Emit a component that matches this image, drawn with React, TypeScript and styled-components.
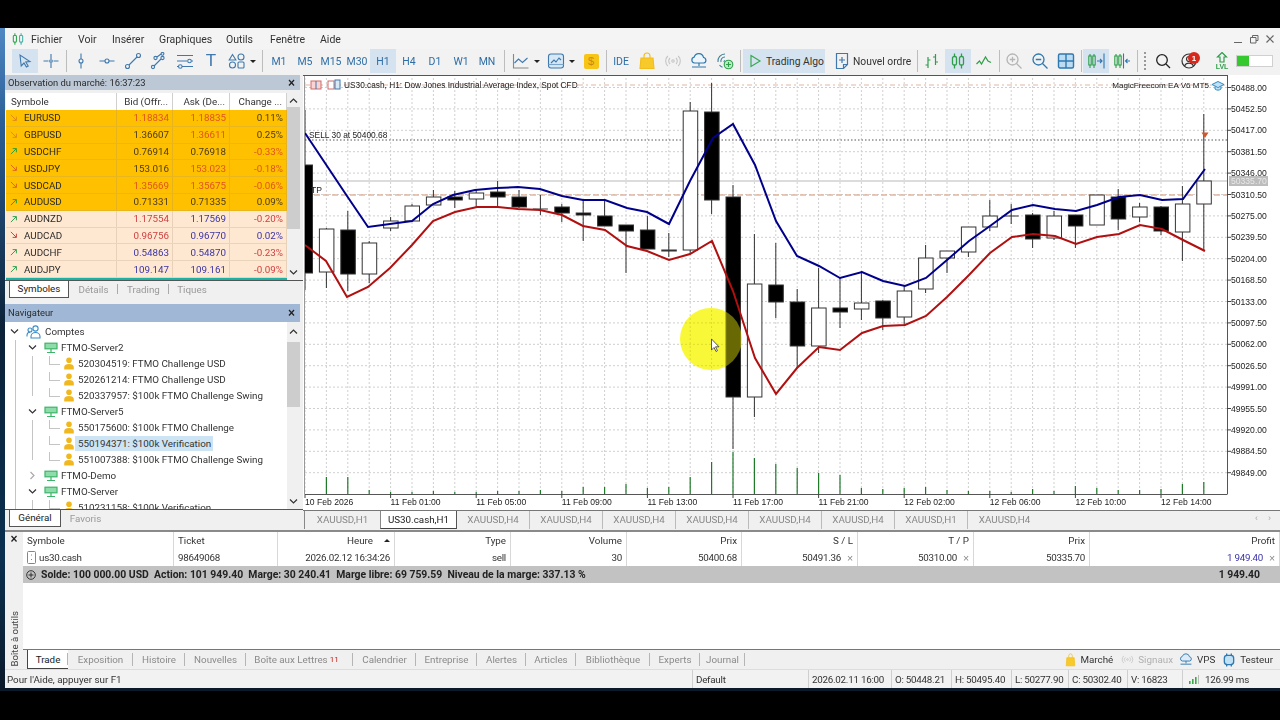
import React from "react";
import styled, { createGlobalStyle } from "styled-components";

const Global = createGlobalStyle`
  html, body { margin: 0; padding: 0; background: #000; }
  body { font-family: Roboto, "Liberation Sans", sans-serif; font-size: 9.8px; color: #222; overflow: hidden; }
  #root { height: 720px; }
`;

const Page = styled.div`
  height: 720px;
  padding-top: 28px;
  box-sizing: border-box;
  background: #000;
`;
const Desktop = styled.div`
  height: 663px;
  padding: 0 0 3px 5px;
  box-sizing: border-box;
  background: linear-gradient(180deg, #4f88c4 0, #2c5f96 14%, #0c2238 45%, #0a3050 80%, #0b1a2a 100%);
`;
const Win = styled.div`
  height: 660px;
  background: #f0f0f0;
  display: flex;
  flex-direction: column;
`;
const MenuBar = styled.div`
  height: 21px;
  padding-top: 1px;
  box-sizing: border-box;
  display: flex;
  align-items: center;
  background: #f4f4f4;
  flex: none;
`;
const Logo = styled.span`
  width: 26px;
  display: flex;
  justify-content: center;
`;
const MenuItem = styled.span<{ $w: number }>`
  width: ${(p) => p.$w}px;
  font-size: 10.5px;
  color: #333;
`;
const WinCtrls = styled.div`
  margin-left: auto;
  display: flex;
  align-items: center;
  gap: 2px;
  padding-right: 3px;
`;
const WinBtn = styled.span`
  width: 14px;
  height: 14px;
  display: flex;
  align-items: center;
  justify-content: center;
`;
const ToolBar = styled.div`
  height: 26px;
  padding-bottom: 2px;
  box-sizing: border-box;
  flex: none;
  display: flex;
  align-items: center;
  padding-left: 7px;
  background: #f2f2f2;
`;
const Btn = styled.span<{ $w?: number; $on?: boolean; $ml?: number }>`
  width: ${(p) => p.$w ?? 26}px;
  margin-left: ${(p) => p.$ml ?? 0}px;
  height: 24px;
  flex: none;
  display: flex;
  align-items: center;
  justify-content: center;
  position: relative;
  color: #2f6ea5;
  font-size: 10.5px;
  background: ${(p) => (p.$on ? "#d5e3f0" : "transparent")};
`;
const Sep = styled.span<{ $w?: number }>`
  width: ${(p) => p.$w ?? 4}px;
  height: 22px;
  flex: none;
  display: flex;
  justify-content: center;
  &::after {
    content: "";
    width: 1px;
    height: 100%;
    background: #bdbdbd;
  }
`;
const DotSep = styled.span`
  width: 11px;
  height: 18px;
  flex: none;
  display: flex;
  justify-content: center;
  &::after {
    content: "";
    border-left: 2px dotted #999;
    height: 100%;
  }
`;
const Caret = styled.span<{ $w?: number }>`
  width: ${(p) => p.$w ?? 8}px;
  flex: none;
  display: flex;
  justify-content: flex-start;
  &::after {
    content: "";
    border-left: 3px solid transparent;
    border-right: 3px solid transparent;
    border-top: 3px solid #222;
  }
`;
const BigBtn = styled(Btn)`
  justify-content: flex-start;
  gap: 2px;
  padding-left: 3px;
  box-sizing: border-box;
  color: #333;
  font-size: 10.3px;
  white-space: nowrap;
`;
const Tee = styled.span`
  font: 17px "Liberation Sans", sans-serif;
  color: #3f78ad;
`;
const DollarBox = styled.span`
  width: 15px;
  height: 15px;
  border-radius: 2px;
  background: #f7c516;
  color: #c98a10;
  display: flex;
  align-items: center;
  justify-content: center;
  font: 11px "Liberation Sans", sans-serif;
`;
const Badge = styled.span`
  position: absolute;
  top: 3px;
  right: 2px;
  width: 12px;
  height: 12px;
  border-radius: 50%;
  background: #d6291c;
  color: #fff;
  font: bold 8px "Liberation Sans", sans-serif;
  display: flex;
  align-items: center;
  justify-content: center;
`;
const Lvl = styled.span`
  display: flex;
  flex-direction: column;
  align-items: center;
  color: #2f9e4a;
  font: bold 7px "Liberation Sans", sans-serif;
  line-height: 7px;
`;
const Meter = styled.span`
  width: 37px;
  height: 12px;
  flex: none;
  background: #fff;
  border: 1px solid #d0d0d0;
  box-sizing: border-box;
  margin-left: 1px;
  display: flex;
  &::before {
    content: "";
    width: 12px;
    background: #35c92f;
  }
`;

const Main = styled.div`
  height: 455px;
  flex: none;
  display: flex;
`;
const Left = styled.div`
  width: 298px;
  flex: none;
  display: flex;
  flex-direction: column;
`;
const PanelHead = styled.div<{ $blue?: boolean }>`
  height: ${(p) => (p.$blue ? 18 : 15)}px;
  flex: none;
  background: ${(p) => (p.$blue ? "#a0b8d6" : "#bcc8d6")};
  display: flex;
  align-items: center;
  justify-content: space-between;
  padding: 0 5px 0 3px;
  width: 295px;
  box-sizing: border-box;
  color: #2a2a2a;
  font-size: 9.4px;
`;
const CloseX = styled.span`
  font: bold 12px "Liberation Sans", sans-serif;
  color: #222;
`;
const MarketBody = styled.div`
  display: flex;
  margin-top: 3px;
  padding-left: 1px;
`;
const MarketTable = styled.div`
  width: 281px;
  flex: none;
`;
const MRow = styled.div<{ $bg?: string; $h: number }>`
  display: grid;
  grid-template-columns: 111px 56px 57px 57px;
  height: ${(p) => p.$h}px;
  align-items: stretch;
  background: ${(p) => p.$bg ?? "#fff"};
  border-bottom: ${(p) => (p.$bg ? "1px solid rgba(170,150,120,.25)" : "none")};
  box-sizing: border-box;
`;
const HCell = styled.div<{ $r?: boolean }>`
  display: flex;
  align-items: center;
  justify-content: ${(p) => (p.$r ? "flex-end" : "flex-start")};
  padding: ${(p) => (p.$r ? "0 4px 0 0" : "0 0 0 5px")};
  border-right: 1px solid #d0d0d0;
  color: #333;
`;
const SymCell = styled.div`
  display: flex;
  align-items: center;
  gap: 6px;
  padding-left: 4px;
  color: #2b2b2b;
  border-right: 1px solid rgba(160, 140, 110, 0.25);
`;
const NumCell = styled.div<{ $c: string }>`
  display: flex;
  align-items: center;
  justify-content: flex-end;
  padding-right: 3px;
  color: ${(p) => p.$c};
  border-right: 1px solid rgba(160, 140, 110, 0.25);
`;
const Teal = styled.div`
  height: 2px;
  background: #19b3a6;
  width: 281px;
`;
const ScrollBar = styled.div`
  width: 13px;
  flex: none;
  background: #f0f0f0;
  display: flex;
  flex-direction: column;
  align-items: center;
`;
const Thumb = styled.div<{ $h: number }>`
  width: 100%;
  height: ${(p) => p.$h}px;
  background: #cdcdcd;
`;
const Fill = styled.div`
  flex: 1;
`;
const Arrow = styled.span<{ $h?: number }>`
  height: ${(p) => p.$h ?? 14}px;
  display: flex;
  align-items: center;
`;
const TabsRow = styled.div<{ $h: number }>`
  height: ${(p) => p.$h}px;
  flex: none;
  display: flex;
  border-top: 1px solid #555;
  box-sizing: border-box;
  padding-left: 4px;
`;
const SideTab = styled.div<{ $w: number; $on?: boolean; $sep?: boolean }>`
  width: ${(p) => p.$w}px;
  box-sizing: border-box;
  display: flex;
  align-items: center;
  justify-content: center;
  color: ${(p) => (p.$on ? "#222" : "#999")};
  background: ${(p) => (p.$on ? "#fff" : "transparent")};
  border: ${(p) => (p.$on ? "1px solid #555" : "none")};
  border-top: none;
  position: relative;
  &::after {
    content: "";
    display: ${(p) => (p.$sep ? "block" : "none")};
    position: absolute;
    right: 0;
    top: 3px;
    bottom: 4px;
    width: 1px;
    background: #aaa;
  }
`;
const Nav = styled.div`
  margin-top: 6px;
  display: flex;
  flex-direction: column;
`;
const NavBody = styled.div`
  height: 187px;
  display: flex;
  background: #fff;
  width: 295px;
`;
const Tree = styled.div`
  width: 282px;
  flex: none;
  overflow: hidden;
  padding-top: 2px;
`;
const TreeRow = styled.div<{ $x: number }>`
  height: 16px;
  display: flex;
  align-items: center;
  padding-left: ${(p) => p.$x}px;
  position: relative;
  color: #333;
`;
const Guide = styled.span<{ $x: number; $tall?: boolean; $w?: number }>`
  position: absolute;
  left: ${(p) => p.$x}px;
  top: 0;
  height: ${(p) => (p.$tall ? 16 : 8)}px;
  width: ${(p) => p.$w ?? 0}px;
  border-left: 1px solid #c4c4c4;
  border-bottom: ${(p) => (p.$w ? "1px solid #c4c4c4" : "none")};
`;
const Chevron = styled.span`
  width: 18px;
  margin-right: 3px;
  flex: none;
  display: flex;
  align-items: center;
  justify-content: center;
`;
const Label = styled.span<{ $sel?: boolean }>`
  padding: 1px 2px;
  margin-left: 1px;
  background: ${(p) => (p.$sel ? "#cde4f5" : "transparent")};
  white-space: nowrap;
`;
const SelWrap = styled.span<{ $sel?: boolean }>`
  display: flex;
  align-items: center;
  height: 15px;
  background: ${(p) => (p.$sel ? "#cde4f5" : "transparent")};
`;

const Right = styled.div`
  flex: 1;
  display: flex;
  flex-direction: column;
  min-width: 0;
`;
const ChartBox = styled.div`
  height: 435px;
  flex: none;
  background: #fff;
`;
const ChartTabs = styled.div`
  height: 20px;
  flex: none;
  display: flex;
  align-items: center;
  border-top: 1px solid #777;
  box-sizing: border-box;
  padding-left: 1px;
  position: relative;
`;
const ChartTab = styled.div<{ $w: number; $on?: boolean; $first?: boolean; $sep?: boolean }>`
  width: ${(p) => p.$w}px;
  height: 18px;
  box-sizing: border-box;
  display: flex;
  align-items: center;
  justify-content: center;
  color: ${(p) => (p.$on ? "#222" : "#888")};
  background: ${(p) => (p.$on ? "#fff" : "transparent")};
  border-left: ${(p) => (p.$on || p.$first ? "1px solid #888" : "none")};
  border-right: ${(p) => (p.$on ? "1px solid #555" : p.$sep ? "1px solid #bbb" : "none")};
  border-bottom: ${(p) => (p.$on ? "1px solid #444" : "none")};
  margin-top: -2px;
`;
const TabArrows = styled.span`
  position: absolute;
  right: 9px;
  top: 2px;
  display: flex;
  gap: 10px;
  color: #aaa;
  font: 9px "Liberation Sans", sans-serif;
`;

const Toolbox = styled.div`
  height: 139px;
  flex: none;
  display: flex;
  border-top: 2px solid #8a8a8a;
  box-sizing: border-box;
`;
const BoxSide = styled.div`
  width: 18px;
  flex: none;
  display: flex;
  flex-direction: column;
  align-items: center;
  justify-content: space-between;
  padding-bottom: 2px;
  box-sizing: border-box;
`;
const Vertical = styled.span`
  writing-mode: vertical-rl;
  transform: rotate(180deg);
  font-size: 9.6px;
  color: #444;
`;
const ToolboxInner = styled.div`
  flex: 1;
  min-width: 0;
  display: flex;
  flex-direction: column;
`;
const TradeArea = styled.div`
  flex: 1;
  background: #fff;
  display: flex;
  flex-direction: column;
`;
const TRow = styled.div<{ $h: number }>`
  height: ${(p) => p.$h}px;
  flex: none;
  display: grid;
  grid-template-columns: 151px 104px 117px 116px 116px 115px 116px 116px 116px 1fr;
`;
const TCell = styled.div<{ $r?: boolean; $c?: string }>`
  display: flex;
  align-items: center;
  justify-content: ${(p) => (p.$r ? "flex-end" : "flex-start")};
  padding: 0 4px;
  gap: 3px;
  color: ${(p) => p.$c ?? "#333"};
  border-right: 1px solid #d8d8d8;
  white-space: nowrap;
`;
const TNum = styled(TCell)`
  letter-spacing: -0.25px;
`;
const SmallX = styled.span`
  color: #888;
  font: 10.5px "Liberation Sans", sans-serif;
  margin-left: 3px;
`;
const Sort = styled.span`
  border-left: 3px solid transparent;
  border-right: 3px solid transparent;
  border-bottom: 3px solid #222;
  margin-left: 8px;
`;
const TotalRow = styled.div`
  height: 17px;
  flex: none;
  background: #c2c2c2;
  display: flex;
  align-items: center;
  padding: 0 20px 0 3px;
  gap: 5px;
  font-size: 10.4px;
  font-weight: 700;
  color: #222;
  white-space: pre;
`;
const Total = styled.span`
  margin-left: auto;
`;
const BottomTabs = styled.div`
  height: 20px;
  flex: none;
  display: flex;
  align-items: stretch;
  border-top: 1px solid #777;
  box-sizing: border-box;
  padding-left: 4px;
`;
const BTab = styled.div<{ $w: number; $on?: boolean }>`
  width: ${(p) => p.$w}px;
  box-sizing: border-box;
  display: flex;
  align-items: center;
  justify-content: center;
  color: ${(p) => (p.$on ? "#222" : "#8a8a8a")};
  background: ${(p) => (p.$on ? "#fff" : "transparent")};
  border-left: ${(p) => (p.$on ? "1px solid #444" : "none")};
  border-bottom: ${(p) => (p.$on ? "1px solid #444" : "none")};
  position: relative;
  &::after {
    content: "";
    position: absolute;
    right: 0;
    top: 3px;
    bottom: 3px;
    width: 1px;
    background: #b5b5b5;
  }
`;
const Sub = styled.sub`
  color: #c02020;
  font-size: 8px;
  margin-left: 2px;
  margin-right: 6px;
  line-height: 0;
`;
const TabRight = styled.div`
  margin-left: auto;
  display: flex;
  align-items: center;
  gap: 4px;
  padding-right: 7px;
  color: #333;
`;
const Dim = styled.span`
  color: #b0b0b0;
  margin-right: 2px;
`;
const Spaced = styled.span<{ $m: number }>`
  margin-right: ${(p) => p.$m}px;
`;
const StatusBar = styled.div`
  flex: 1;
  display: flex;
  align-items: center;
  border-top: 1px solid #ddd;
  box-sizing: border-box;
  color: #333;
  background: #f2f2f2;
`;
const SCell = styled.div<{ $w: number }>`
  width: ${(p) => p.$w}px;
  flex: none;
  height: 100%;
  display: flex;
  align-items: center;
  gap: 6px;
  padding-left: 3px;
  box-sizing: border-box;
  border-left: 1px solid #cfcfcf;
  white-space: nowrap;
  letter-spacing: -0.25px;
`;
const SFirst = styled.div`
  width: 685px;
  flex: none;
  padding-left: 2px;
`;
const BarsWrap = styled.span`
  margin-left: 3px;
  display: flex;
`;

/* ---------- icons ---------- */
const Ic: React.FC<{ s?: number; children: React.ReactNode; c?: string; f?: string; w?: number }> = ({ s = 18, children, c = "#3f78ad", f = "none", w = 1.1 }) => (
  <svg width={s} height={s} viewBox="0 0 18 18" fill={f} stroke={c} strokeWidth={w}>
    {children}
  </svg>
);
const CursorIc = () => <Ic><path d="M4 3l1.2 11 2.8-3 2.4 4 1.8-1-2.4-4 4.2-.4z" /></Ic>;
const CrossIc = () => <Ic><path d="M1.500 9h5M11.500 9h5M9 2v5M9 11v5" /><circle cx="9" cy="9" r="1.300" /></Ic>;
const VertIc = () => <Ic><path d="M9 1.500v5.500M9 11v5.500" /><circle cx="9" cy="9" r="2" /></Ic>;
const HorIc = () => <Ic><path d="M1.500 9h5.500M11 9h5.500" /><circle cx="9" cy="9" r="2" /></Ic>;
const TrendIc = () => <Ic><path d="M5 13l8-8" /><circle cx="3.500" cy="14.500" r="2" /><circle cx="14.500" cy="3.500" r="2" /></Ic>;
const ChanIc = () => <Ic><path d="M7 5l4-3M4 14l7-7" /><circle cx="5.500" cy="6" r="1.600" /><circle cx="12.500" cy="1.800" r="1.400" /><circle cx="3" cy="15" r="1.600" /><circle cx="12.500" cy="6" r="1.600" /></Ic>;
const FiboIc = () => <Ic><path d="M1 3.500h16M1 9h10M15.500 9H17M1 14.500h1.500M6 14.500h11" /><circle cx="13.500" cy="9" r="1.800" /><circle cx="4.300" cy="14.500" r="1.800" /></Ic>;
const ShapesIc = () => <Ic><path d="M4.500 2.500l3.400 5.500H1.200z" /><circle cx="13" cy="5" r="3" /><circle cx="4.500" cy="13" r="3" /><rect x="10" y="10" width="6" height="6" rx="1" /></Ic>;
const LineChartIc = () => <Ic c="#3f78ad"><path d="M1.500 2v14h15" stroke="#888" /><path d="M2.500 11l4-4 4 3.500 5-4.500" /></Ic>;
const TemplateIc = () => <Ic f="#d6e8f5"><rect x="1.500" y="2" width="15" height="14" rx="2.500" /><path d="M4 11l3-3 2 2 3-4 2 2" fill="none" /><path d="M1.500 12.500h15" stroke="#7aa6cc" /></Ic>;
const BagIc = () => <Ic c="#f2bd1a" f="#f7c92a"><path d="M3 6h12l1 10.500H2z" /><path d="M6 6V4a3 3 0 016 0v2" fill="none" /></Ic>;
const SignalIc = ({ s = 18 }: { s?: number }) => <Ic s={s} c="#c4c4c4"><circle cx="9" cy="9" r="1.200" /><path d="M6 6a4.200 4.200 0 000 6M12 6a4.200 4.200 0 010 6M3.800 4a7 7 0 000 10M14.200 4a7 7 0 010 10" /></Ic>;
const CloudIc = () => <Ic c="#2f78b0" w={1.2}><path d="M4.500 11a3 3 0 01-.3-5.900 4.800 4.800 0 019.300.4 2.800 2.800 0 01.2 5.500z" fill="#eef5fb" /><path d="M9 11v3M2 15h14" /></Ic>;
const RadarIc = () => <Ic c="#3d7f96"><path d="M2 10a7 7 0 017-8M5 10a4 4 0 014-5M8 10a1.500 1.500 0 011-1.500" /><path d="M3.500 13a7 7 0 003 2.300" /><circle cx="12.500" cy="12.500" r="4.300" fill="#bfe7c9" stroke="#2f9e4a" /><path d="M12.500 10v5M10 12.500h5" stroke="#2f9e4a" /></Ic>;
const PlayIc = () => <Ic c="#39a84f" w={1.2}><path d="M5 3.500l9 5.500-9 5.500z" /></Ic>;
const OrderIc = () => <Ic c="#3f78ad" w={1.2}><path d="M3.500 1.500h11v11l-4 4h-7z" /><path d="M14.500 12.500h-4v4M9 5v6M6 8h6" /></Ic>;
const BarsIc = () => <Ic c="#2f9e4a" w={1.2}><path d="M5 5v11M2.500 13H5M5 8h2.500M12.500 2v11M10 5h2.500M12.500 10H15" /></Ic>;
const CandlesIc = () => <Ic c="#2f9e4a" w={1.3}><path d="M5.500 1.500v3M5.500 13v3.500M12.500 1.500v3M12.500 13v3.500" /><rect x="3.500" y="4.500" width="4" height="8.500" rx="1.600" /><rect x="10.500" y="4.500" width="4" height="8.500" rx="1.600" /></Ic>;
const WaveIc = () => <Ic c="#2f9e4a" w={1.2}><path d="M1.500 12l3-3 2 3 4-7 2.500 4 3 1.500" /></Ic>;
const ZoomIc = ({ plus, c }: { plus?: boolean; c: string }) => <Ic c={c} w={1.3}><circle cx="7.500" cy="7.500" r="5.500" /><path d="M11.500 11.500l5 5M4.800 7.500h5.400" />{plus && <path d="M7.500 4.800v5.400" />}</Ic>;
const GridIc = () => <Ic f="#bcdcf3" c="#2f78b0" w={1.4}><rect x="1.500" y="2" width="15" height="14" rx="1.500" /><path d="M9 2v14M1.500 9h15" /></Ic>;
const AutoIc = () => <Ic c="#2f9e4a" w={1.1}><path d="M3 2v2M3 13v3M7 2v2M7 13v3" /><rect x="1.800" y="4" width="2.400" height="9" /><rect x="5.800" y="4" width="2.400" height="9" /><path d="M10 9h5M13 7l2 2-2 2" stroke="#2f78b0" /><path d="M17 1.500v15" stroke="#2f78b0" /></Ic>;
const ShiftIc = () => <Ic c="#2f9e4a" w={1.1}><path d="M3 2v2M3 13v3M7 2v2M7 13v3" /><rect x="1.800" y="4" width="2.400" height="9" /><rect x="5.800" y="4" width="2.400" height="9" /><path d="M10.500 1.500v15" stroke="#2f78b0" /><path d="M17 9h-4.500M14.500 7l-2 2 2 2" stroke="#2f78b0" /></Ic>;
const SearchIc = () => <Ic c="#222" w={1.3}><circle cx="8" cy="8" r="5.300" /><path d="M12 12l4 4" /></Ic>;
const AcctIc = () => <Ic c="#333" w={1.2}><circle cx="9" cy="9" r="7" /><circle cx="9" cy="7" r="2.500" /><path d="M4.500 14a5 5 0 019 0" /></Ic>;
const UpIc = () => <svg width="12" height="11" viewBox="0 0 12 11"><path d="M6 .5L10.500 5H8v5H4V5H1.500z" fill="none" stroke="#2f9e4a" strokeWidth="1.200" /></svg>;
const LogoIc = () => <Ic s={14} c="#34a853" w={1.4}><path d="M5 1.500v3M5 13v3.500" /><rect x="3" y="4.500" width="4" height="8.500" rx="1" /><path d="M13 1.500v3M13 13v3.500" stroke="#46b1a6" /><rect x="11" y="4.500" width="4" height="8.500" rx="1" stroke="#46b1a6" /></Ic>;

const MiniArrow = ({ up, c }: { up?: boolean; c: string }) => (
  <svg width="8" height="8" viewBox="0 0 9 9" fill="none" stroke={c} strokeWidth="1.100">
    {up ? <path d="M1 8l6-6M3 1.800h4.200V6" /> : <path d="M1 1l6 6M7.200 3v4.200H3" />}
  </svg>
);
const ChevDown = ({ c = "#333" }: { c?: string }) => (
  <svg width="9" height="7" viewBox="0 0 9 7" fill="none" stroke={c} strokeWidth="1.200"><path d="M1 1.500l3.500 3.500L8 1.500" /></svg>
);
const ChevUp = ({ c = "#333" }: { c?: string }) => (
  <svg width="9" height="7" viewBox="0 0 9 7" fill="none" stroke={c} strokeWidth="1.200"><path d="M1 5.500L4.500 2 8 5.500" /></svg>
);
const ChevRight = () => (
  <svg width="7" height="9" viewBox="0 0 7 9" fill="none" stroke="#aaa" strokeWidth="1.200"><path d="M1.500 1L5 4.500 1.500 8" /></svg>
);
const PeopleIc = () => (
  <svg width="16" height="14" viewBox="0 0 16 14" fill="none" stroke="#3a8dc9" strokeWidth="1.100">
    <circle cx="9.500" cy="3.500" r="2.600" /><path d="M5 13v-1.500a4.500 4 0 019 0V13z" /><circle cx="4" cy="5" r="2" /><path d="M1 11.500V10a3 3 0 013-2.700" />
  </svg>
);
const ServerIc = () => (
  <svg width="14" height="12" viewBox="0 0 14 12" fill="none" stroke="#3cb46a" strokeWidth="1.200">
    <rect x="1" y="1.200" width="12" height="5.600" fill="#8fdcab" /><path d="M7 7v3M3 10.500h8" />
  </svg>
);
const UserIc = () => (
  <svg width="12" height="13" viewBox="0 0 12 13" fill="#f1b71f">
    <circle cx="6" cy="3.300" r="2.800" /><path d="M1.200 12.500V10c0-2 2-3 4.800-3s4.800 1 4.800 3v2.500z" />
  </svg>
);
const DocIc = () => (
  <svg width="9" height="13" viewBox="0 0 9 13" fill="#fff" stroke="#d8625e" strokeWidth="1"><rect x=".5" y=".5" width="8" height="12" rx="1" /><path d="M4.500 3.500v1M4.500 8v1" /></svg>
);
const PlusCircle = () => (
  <svg width="10" height="10" viewBox="0 0 10 10" fill="none" stroke="#222" strokeWidth=".9"><circle cx="5" cy="5" r="4.300" /><path d="M2.500 5h5M5 2.500v5" /></svg>
);
const Bars = () => (
  <svg width="10" height="9" viewBox="0 0 10 9" fill="#3aa84a"><rect x="0" y="6" width="1.600" height="3" /><rect x="3" y="4" width="1.600" height="5" /><rect x="6" y="2" width="1.600" height="7" /><rect x="9" y="0" width="1" height="9" fill="#bbb" /></svg>
);
const TesterIc = () => (
  <svg width="14" height="14" viewBox="0 0 15 15" fill="#bfe0f5" stroke="#2f78b0" strokeWidth="1.400"><rect x="2.500" y="2.500" width="10" height="10" rx="3" /><path d="M5 .5v2M10 .5v2M5 12.500v2M10 12.500v2" /></svg>
);
const SmallBag = () => (
  <svg width="11" height="14" viewBox="0 0 18 18" stroke="#f2bd1a" fill="#f7c92a" preserveAspectRatio="none"><path d="M3 6h12l1 10.500H2z" /><path d="M6 6V4a3 3 0 016 0v2" fill="none" /></svg>
);
const SmallCloud = () => (
  <svg width="14" height="15" viewBox="0 0 18 18" stroke="#2f78b0" strokeWidth="1.200" fill="none"><path d="M4.500 11a3 3 0 01-.3-5.900 4.800 4.800 0 019.300.4 2.800 2.800 0 01.2 5.500z" fill="#dcebf7" /><path d="M9 11v3M2 15h14" /></svg>
);

/* ---------- data ---------- */
const RED = "#e0541c";
const DK = "#4a3a1c";
const PR = "#d04040";
const BL = "#3a34a8";
type MR = [string, string, string, string, string, string, string, boolean, string, boolean];
const market: MR[] = [
  ["EURUSD", "1.18834", RED, "1.18835", RED, "0.11%", DK, false, "#e08a1a", true],
  ["GBPUSD", "1.36607", DK, "1.36611", RED, "0.25%", DK, false, "#e08a1a", true],
  ["USDCHF", "0.76914", DK, "0.76918", DK, "-0.33%", RED, true, "#2f9e2f", true],
  ["USDJPY", "153.016", DK, "153.023", RED, "-0.18%", RED, false, "#e0641a", true],
  ["USDCAD", "1.35669", RED, "1.35675", RED, "-0.06%", RED, false, "#e0641a", true],
  ["AUDUSD", "0.71331", DK, "0.71335", DK, "0.09%", DK, true, "#2f9e2f", true],
  ["AUDNZD", "1.17554", PR, "1.17569", BL, "-0.20%", PR, true, "#2f9e4f", false],
  ["AUDCAD", "0.96756", PR, "0.96770", BL, "0.02%", BL, false, "#c84040", false],
  ["AUDCHF", "0.54863", BL, "0.54870", BL, "-0.23%", PR, true, "#2f9e4f", false],
  ["AUDJPY", "109.147", BL, "109.161", BL, "-0.09%", PR, true, "#2f9e4f", false],
];

type Node = { k: "root" | "srv" | "acc" | "closed"; t: string; sel?: boolean; last?: boolean };
const tree: Node[] = [
  { k: "root", t: "Comptes" },
  { k: "srv", t: "FTMO-Server2" },
  { k: "acc", t: "520304519: FTMO Challenge USD" },
  { k: "acc", t: "520261214: FTMO Challenge USD" },
  { k: "acc", t: "520337957: $100k FTMO Challenge Swing", last: true },
  { k: "srv", t: "FTMO-Server5" },
  { k: "acc", t: "550175600: $100k FTMO Challenge" },
  { k: "acc", t: "550194371: $100k Verification", sel: true },
  { k: "acc", t: "551007388: $100k FTMO Challenge Swing", last: true },
  { k: "closed", t: "FTMO-Demo" },
  { k: "srv", t: "FTMO-Server" },
  { k: "acc", t: "510231158: $100k Verification" },
];

const S = 21.4;
const X = (i: number) => 305 + S * i;
// [i, bodyTop, bodyBottom, wickTop, wickBottom, black]
const candles: [number, number, number, number, number, number][] = [
  [0, 165, 273, 110, 290, 1], [1, 229, 272, 228, 288, 0], [2, 230, 274, 211, 291, 1], [3, 243, 274, 241, 283, 0],
  [4, 221, 228, 217, 231, 0], [5, 206, 221, 204, 221, 0], [6, 197, 205, 190, 205, 0], [7, 197, 200, 191, 208, 1],
  [8, 193, 199, 190, 207, 0], [9, 192, 197, 181, 207, 1], [10, 197, 207, 190, 208, 1], [11, 209, 209, 195, 215, 1],
  [12, 207, 213, 204, 222, 1], [13, 213, 215, 199, 241, 1], [14, 216, 226, 199, 226, 1], [15, 225, 231, 225, 273, 1],
  [16, 230, 249, 216, 249, 1], [17, 250, 251, 233, 257, 0], [18, 111, 250, 102, 253, 0], [19, 112, 200, 83, 214, 1],
  [20, 197, 397, 185, 449, 1], [21, 284, 397, 234, 417, 0], [22, 285, 302, 243, 318, 1], [23, 302, 346, 289, 368, 1],
  [24, 308, 346, 268, 353, 0], [25, 308, 312, 278, 328, 1], [26, 303, 309, 271, 320, 0], [27, 301, 318, 300, 330, 1],
  [28, 291, 317, 286, 325, 0], [29, 258, 289, 245, 293, 0], [30, 251, 258, 251, 273, 0], [31, 227, 252, 227, 257, 0],
  [32, 216, 227, 200, 231, 0], [33, 216, 216, 204, 224, 1], [34, 215, 239, 213, 248, 1], [35, 216, 238, 211, 240, 0],
  [36, 215, 226, 215, 248, 1], [37, 195, 225, 195, 225, 0], [38, 197, 219, 189, 230, 1], [39, 207, 217, 203, 222, 0],
  [40, 207, 231, 206, 235, 1], [41, 204, 232, 186, 261, 0], [42, 181, 204, 114, 251, 0],
];
const blue = "305,133 347,196 368,227 412,221 433,204 453,195 475,190 497,188 518,187 540,189 562,196 583,200 605,200 627,208 647,212 669,224 690,181 713,138 733,124 755,165 776,221 797,256 819,266 840,278 862,272 883,281 905,286 926,278 947,260 969,241 990,226 1012,210 1033,205 1055,209 1076,211 1097,205 1119,197 1140,195 1162,200 1183,199 1205,169";
const red = "305,245 326,261 347,297 368,287 390,268 412,245 433,221 455,212 477,207 498,207 518,209 540,210 562,215 583,226 605,230 627,246 647,251 669,260 690,254 712,241 733,291 755,358 776,394 797,368 819,347 840,350 862,333 883,326 905,325 926,316 947,297 969,275 990,253 1012,237 1033,234 1055,236 1076,244 1097,237 1119,234 1140,225 1162,229 1183,240 1205,251";
const volTops = [0, 477, 477, 490, 492, 492, 491, 492, 492, 491, 491, 490, 491, 487, 487, 484, 488, 487, 477, 462, 452, 458, 464, 468, 473, 475, 488, 489, 488, 487, 490, 491, 491, 492, 489, 491, 486, 488, 490, 490, 489, 484, 482];
const prices = ["50488.00", "50452.50", "50417.00", "50381.50", "50346.00", "50310.50", "50275.00", "50239.50", "50204.00", "50168.50", "50133.00", "50097.50", "50062.00", "50026.50", "49991.00", "49955.50", "49920.00", "49884.50", "49849.00"];
const PY = (i: number) => 87.5 + 21.4 * i;
const times: [number, string][] = [[0, "10 Feb 2026"], [4, "11 Feb 01:00"], [8, "11 Feb 05:00"], [12, "11 Feb 09:00"], [16, "11 Feb 13:00"], [20, "11 Feb 17:00"], [24, "11 Feb 21:00"], [28, "12 Feb 02:00"], [32, "12 Feb 06:00"], [36, "12 Feb 10:00"], [40, "12 Feb 14:00"]];
const fontChart = { fontFamily: '"Liberation Sans", sans-serif', fontSize: 8.6, fill: "#222" };

const Chart = () => (
  <svg width="977" height="435" viewBox="303 75 977 435" style={{ display: "block" }}>
    <defs>
      <clipPath id="plot"><rect x="305" y="78" width="922" height="416" /></clipPath>
    </defs>
    <rect x="303" y="75" width="977" height="435" fill="#fff" />
    {Array.from({ length: 43 }, (_, i) => (
      <line key={i} x1={X(i)} x2={X(i)} y1="78" y2="494" stroke="#cfcfcf" strokeWidth="1" strokeDasharray="2 2" />
    ))}
    {prices.map((_, i) => (
      <line key={i} x1="305" x2="1227" y1={PY(i)} y2={PY(i)} stroke="#cfcfcf" strokeWidth="1" strokeDasharray="2 2" />
    ))}
    <line x1="305" x2="1227" y1="85" y2="85" stroke="#e0b8a4" strokeWidth="1.200" strokeDasharray="5 3 2 3" />
    <line x1="305" x2="1227" y1="195" y2="195" stroke="#e3b7a1" strokeWidth="1.400" strokeDasharray="6 3" />
    <line x1="305" x2="1227" y1="140" y2="140" stroke="#555" strokeWidth="1" strokeDasharray="1.500 2" />
    <line x1="305" x2="1227" y1="181" y2="181" stroke="#dcdcdc" strokeWidth="1.800" />
    <g clipPath="url(#plot)">
      {candles.map(([i, t, b, wt, wb, k]) => (
        <g key={i}>
          <line x1={X(i)} x2={X(i)} y1={wt} y2={wb} stroke="#333" strokeWidth="1" />
          {t === b ? (
            <line x1={X(i) - 7.5} x2={X(i) + 7.5} y1={t} y2={t} stroke="#333" />
          ) : (
            <rect x={X(i) - 7} y={t} width="14.500" height={b - t} fill={k ? "#000" : "#fff"} stroke="#333" strokeWidth="1" />
          )}
        </g>
      ))}
      <polyline points={blue} fill="none" stroke="#00008b" strokeWidth="2" />
      <polyline points={red} fill="none" stroke="#b01010" strokeWidth="2" />
      {volTops.map((t, i) => t > 0 && <line key={i} x1={X(i)} x2={X(i)} y1={t} y2="494" stroke="#1f7a2a" strokeWidth="1.200" />)}
    </g>
    <path d="M1201.500 132.500h7l-3.500 5.500z" fill="#d0562c" />
    <line x1="304.500" x2="304.500" y1="76" y2="494" stroke="#999" />
    <line x1="305" x2="1227.500" y1="494.500" y2="494.500" stroke="#555" />
    <line x1="1227.500" x2="1227.500" y1="75" y2="494" stroke="#555" />
    <line x1="303" x2="1227" y1="75.500" y2="75.500" stroke="#555" />
    {prices.map((p, i) => (
      <g key={p}>
        <line x1="1227" x2="1231" y1={PY(i)} y2={PY(i)} stroke="#444" />
        <text x="1231" y={PY(i) + 3} style={fontChart}>{p}</text>
      </g>
    ))}
    <rect x="1229" y="176" width="39" height="10" fill="#bdbdbd" />
    <text x="1231" y="184" style={{ ...fontChart, fill: "#e8e8e8" }}>50335.70</text>
    {times.map(([i, t]) => (
      <g key={t}>
        <line x1={X(i)} x2={X(i)} y1="494" y2="498" stroke="#444" />
        <text x={X(i)} y="505" style={fontChart}>{t}</text>
      </g>
    ))}
    <rect x="311" y="81" width="10" height="8" fill="#f8d4d4" stroke="#d06a6a" />
    <path d="M316 81v8" stroke="#3f78ad" />
    <rect x="328" y="81" width="6" height="8" fill="#fff" stroke="#d06a6a" />
    <rect x="335" y="80" width="5" height="9" fill="#d8e8f5" stroke="#3f78ad" />
    <text x="344" y="88" style={{ ...fontChart, fontSize: 8.3 }}>US30.cash, H1:  Dow Jones Industrial Average Index, Spot CFD</text>
    <text x="309" y="138" style={{ ...fontChart, fontSize: 8.4 }}>SELL 30 at 50400.68</text>
    <text x="311" y="193" style={fontChart}>TP</text>
    <text x="1209" y="88" textAnchor="end" style={{ ...fontChart, fontSize: 8.1 }}>MagicFreecom EA V6 MT5</text>
    <path d="M1212 84.500l6-3 6 3-6 3z M1215 86.500v2.500c2 1.500 4 1.500 6 0v-2.500" fill="#bfe0f5" stroke="#2f8ac0" strokeWidth="1" />
    <circle cx="711" cy="339" r="31" fill="#6b6b10" style={{ mixBlendMode: "screen" }} />
    <circle cx="711" cy="339" r="31" fill="#f8f838" style={{ mixBlendMode: "multiply" }} />
    <path d="M711.500 339v11l2.500-2.500 2 4 1.500-.8-2-3.900h3.500z" fill="#fff" stroke="#333" strokeWidth=".8" />
  </svg>
);

const timeframes = ["M1", "M5", "M15", "M30", "H1", "H4", "D1", "W1", "MN"];
const chartTabs: [string, number][] = [["XAUUSD,H1", 76], ["US30.cash,H1", 77], ["XAUUSD,H4", 73], ["XAUUSD,H4", 73], ["XAUUSD,H4", 73], ["XAUUSD,H4", 73], ["XAUUSD,H4", 73], ["XAUUSD,H4", 73], ["XAUUSD,H1", 73], ["XAUUSD,H4", 73]];
const bottomTabs: [string, number][] = [["Exposition", 65], ["Histoire", 52], ["Nouvelles", 61], ["Boîte aux Lettres", 107], ["Calendrier", 63], ["Entreprise", 61], ["Alertes", 49], ["Articles", 50], ["Bibliothèque", 74], ["Experts", 50], ["Journal", 45]];

export default function App() {
  return (
    <Page>
      <Global />
      <Desktop>
        <Win>
          <MenuBar>
            <Logo><LogoIc /></Logo>
            <MenuItem $w={47}>Fichier</MenuItem>
            <MenuItem $w={34}>Voir</MenuItem>
            <MenuItem $w={47}>Insérer</MenuItem>
            <MenuItem $w={67}>Graphiques</MenuItem>
            <MenuItem $w={44}>Outils</MenuItem>
            <MenuItem $w={50}>Fenêtre</MenuItem>
            <MenuItem $w={40}>Aide</MenuItem>
            <WinCtrls>
              <WinBtn><svg width="10" height="10"><path d="M1 8.500h8" stroke="#666" /></svg></WinBtn>
              <WinBtn><svg width="10" height="10" fill="none" stroke="#666"><path d="M1.500 3.500h5.500v5.500h-5.500zM3.500 3V1.500h5.500v5h-2" /></svg></WinBtn>
              <WinBtn><svg width="10" height="10" stroke="#666" strokeWidth="1.200"><path d="M1.500 1.500l7 7M8.500 1.500l-7 7" /></svg></WinBtn>
            </WinCtrls>
          </MenuBar>
          <ToolBar>
            <Btn $on><CursorIc /></Btn>
            <Btn><CrossIc /></Btn>
            <Sep />
            <Btn><VertIc /></Btn>
            <Btn><HorIc /></Btn>
            <Btn><TrendIc /></Btn>
            <Btn><ChanIc /></Btn>
            <Btn><FiboIc /></Btn>
            <Btn><Tee>T</Tee></Btn>
            <Btn><ShapesIc /></Btn>
            <Caret />
            <Sep $w={8} />
            {timeframes.map((t) => <Btn key={t} $on={t === "H1"}>{t}</Btn>)}
            <Sep $w={8} />
            <Btn><LineChartIc /></Btn>
            <Caret $w={9} />
            <Btn><TemplateIc /></Btn>
            <Caret $w={9} />
            <Btn><DollarBox>$</DollarBox></Btn>
            <Sep />
            <Btn>IDE</Btn>
            <Btn><BagIc /></Btn>
            <Btn><SignalIc /></Btn>
            <Btn><CloudIc /></Btn>
            <Btn><RadarIc /></Btn>
            <Sep $w={5} />
            <BigBtn $w={82} $on><PlayIc />Trading Algo</BigBtn>
            <BigBtn $w={85} $ml={5}><OrderIc />Nouvel ordre</BigBtn>
            <Sep />
            <Btn><BarsIc /></Btn>
            <Btn $on><CandlesIc /></Btn>
            <Btn><WaveIc /></Btn>
            <Sep />
            <Btn><ZoomIc plus c="#b5b5b5" /></Btn>
            <Btn><ZoomIc c="#2f78b0" /></Btn>
            <Btn><GridIc /></Btn>
            <Sep />
            <Btn $on><AutoIc /></Btn>
            <Btn><ShiftIc /></Btn>
            <Sep />
            <DotSep />
            <Btn><SearchIc /></Btn>
            <Btn><AcctIc /><Badge>1</Badge></Btn>
            <Btn $ml={7}><Lvl><UpIc />LVL</Lvl></Btn>
            <Meter />
          </ToolBar>
          <Main>
            <Left>
              <PanelHead>
                <span>Observation du marché: 16:37:23</span>
                <CloseX>×</CloseX>
              </PanelHead>
              <MarketBody>
                <MarketTable>
                  <MRow $h={17}>
                    <HCell>Symbole</HCell>
                    <HCell $r>Bid (Offr...</HCell>
                    <HCell $r>Ask (De...</HCell>
                    <HCell $r>Change ...</HCell>
                  </MRow>
                  {market.map((m) => (
                    <MRow key={m[0]} $h={16.8} $bg={m[9] ? "#ffc000" : "#ffe8d2"}>
                      <SymCell><MiniArrow up={m[7]} c={m[8]} />{m[0]}</SymCell>
                      <NumCell $c={m[2]}>{m[1]}</NumCell>
                      <NumCell $c={m[4]}>{m[3]}</NumCell>
                      <NumCell $c={m[6]}>{m[5]}</NumCell>
                    </MRow>
                  ))}
                  <Teal />
                </MarketTable>
                <ScrollBar>
                  <Arrow><ChevUp /></Arrow>
                  <Thumb $h={122} />
                  <Fill />
                  <Arrow><ChevDown /></Arrow>
                </ScrollBar>
              </MarketBody>
              <TabsRow $h={18}>
                <SideTab $w={60} $on>Symboles</SideTab>
                <SideTab $w={49} $sep>Détails</SideTab>
                <SideTab $w={51} $sep>Trading</SideTab>
                <SideTab $w={46}>Tiques</SideTab>
              </TabsRow>
              <Nav>
                <PanelHead $blue>
                  <span>Navigateur</span>
                  <CloseX>×</CloseX>
                </PanelHead>
                <NavBody>
                  <Tree>
                    {tree.map((n, idx) => {
                      if (n.k === "root") {
                        return (
                          <TreeRow key={idx} $x={0}>
                            <Chevron><ChevDown /></Chevron>
                            <PeopleIc />
                            <Label>{n.t}</Label>
                          </TreeRow>
                        );
                      }
                      if (n.k === "acc") {
                        return (
                          <TreeRow key={idx} $x={58}>
                            <Guide $x={10} $tall />
                            <Guide $x={27} $tall={!n.last} />
                            <Guide $x={44} $w={10} />
                            <UserIc />
                            <SelWrap $sel={n.sel}><Label $sel={n.sel}>{n.t}</Label></SelWrap>
                          </TreeRow>
                        );
                      }
                      return (
                        <TreeRow key={idx} $x={18}>
                          <Guide $x={10} $tall />
                          <Chevron>{n.k === "closed" ? <ChevRight /> : <ChevDown />}</Chevron>
                          <ServerIc />
                          <Label>{n.t}</Label>
                        </TreeRow>
                      );
                    })}
                  </Tree>
                  <ScrollBar>
                    <Arrow $h={20}><ChevUp /></Arrow>
                    <Thumb $h={65} />
                    <Fill />
                    <Arrow><ChevDown /></Arrow>
                  </ScrollBar>
                </NavBody>
              </Nav>
              <TabsRow $h={18}>
                <SideTab $w={52} $on>Général</SideTab>
                <SideTab $w={49}>Favoris</SideTab>
              </TabsRow>
            </Left>
            <Right>
              <ChartBox><Chart /></ChartBox>
              <ChartTabs>
                {chartTabs.map(([t, w], i) => (
                  <ChartTab key={i} $w={w} $on={i === 1} $first={i === 0} $sep={i > 1 && i < 9}>{t}</ChartTab>
                ))}
                <TabArrows><span>‹</span><span>›</span></TabArrows>
              </ChartTabs>
            </Right>
          </Main>
          <Toolbox>
            <BoxSide>
              <CloseX>×</CloseX>
              <Vertical>Boîte à outils</Vertical>
            </BoxSide>
            <ToolboxInner>
              <TradeArea>
                <TRow $h={17}>
                  <TCell>Symbole</TCell>
                  <TCell>Ticket</TCell>
                  <TCell $r>Heure<Sort /></TCell>
                  <TCell $r>Type</TCell>
                  <TCell $r>Volume</TCell>
                  <TCell $r>Prix</TCell>
                  <TCell $r>S / L</TCell>
                  <TCell $r>T / P</TCell>
                  <TCell $r>Prix</TCell>
                  <TCell $r>Profit</TCell>
                </TRow>
                <TRow $h={17}>
                  <TNum><DocIc />us30.cash</TNum>
                  <TNum>98649068</TNum>
                  <TNum $r>2026.02.12 16:34:26</TNum>
                  <TNum $r>sell</TNum>
                  <TNum $r>30</TNum>
                  <TNum $r>50400.68</TNum>
                  <TNum $r>50491.36<SmallX>×</SmallX></TNum>
                  <TNum $r>50310.00<SmallX>×</SmallX></TNum>
                  <TNum $r>50335.70</TNum>
                  <TNum $r $c="#3a34a8">1 949.40<SmallX>×</SmallX></TNum>
                </TRow>
                <TotalRow>
                  <PlusCircle />
                  <span>Solde: 100 000.00 USD  Action: 101 949.40  Marge: 30 240.41  Marge libre: 69 759.59  Niveau de la marge: 337.13 %</span>
                  <Total>1 949.40</Total>
                </TotalRow>
              </TradeArea>
              <BottomTabs>
                <BTab $w={41} $on>Trade</BTab>
                {bottomTabs.map(([t, w]) => (
                  <BTab key={t} $w={w}>{t}{t.startsWith("Boîte") && <Sub>11</Sub>}</BTab>
                ))}
                <TabRight>
                  <SmallBag />
                  <Spaced $m={4}>Marché</Spaced>
                  <SignalIc s={13} />
                  <Dim>Signaux</Dim>
                  <SmallCloud />
                  <Spaced $m={3}>VPS</Spaced>
                  <TesterIc />
                  <span>Testeur</span>
                </TabRight>
              </BottomTabs>
            </ToolboxInner>
          </Toolbox>
          <StatusBar>
            <SFirst>Pour l'Aide, appuyer sur F1</SFirst>
            <SCell $w={116}>Default</SCell>
            <SCell $w={83}>2026.02.11 16:00</SCell>
            <SCell $w={60}>O: 50448.21</SCell>
            <SCell $w={60}>H: 50495.40</SCell>
            <SCell $w={57}>L: 50277.90</SCell>
            <SCell $w={59}>C: 50302.40</SCell>
            <SCell $w={55}>V: 16823</SCell>
            <SCell $w={95}><BarsWrap><Bars /></BarsWrap>126.99 ms</SCell>
          </StatusBar>
        </Win>
      </Desktop>
    </Page>
  );
}
